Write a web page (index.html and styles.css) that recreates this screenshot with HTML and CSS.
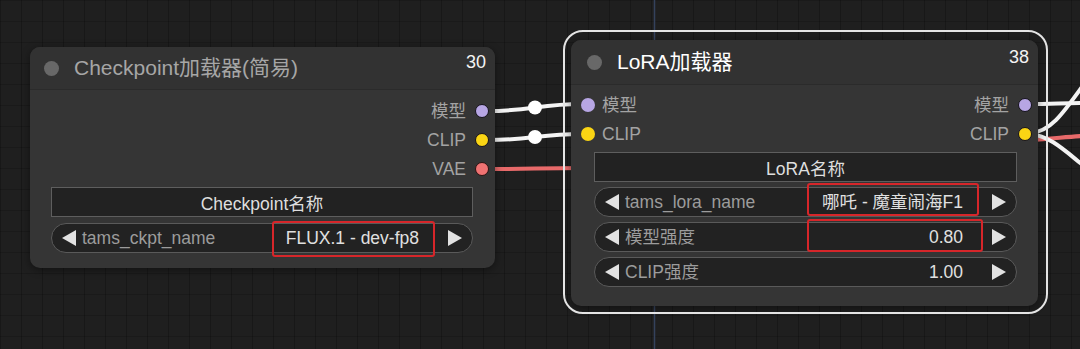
FILE: index.html
```html
<!DOCTYPE html>
<html>
<head>
<meta charset="utf-8">
<link rel="stylesheet" href="styles.css">
</head>
<body>
<div class="canvas">
  <svg class="wires" width="1080" height="349" viewBox="0 0 1080 349">
    <line class="guide" x1="654.5" y1="0" x2="654.5" y2="349"/>
    <path class="w red" d="M488 169 C 530 169, 540 168, 585 168"/>
    <path class="w red" d="M1030 140 C 1050 139, 1065 137, 1082 136"/>
    <path class="w white" d="M488 111 C 530 111, 540 104, 582 104"/>
    <path class="w white" d="M488 140 C 530 140, 540 134, 582 134"/>
    <circle class="mid" cx="535" cy="107.5" r="7"/>
    <circle class="mid" cx="535" cy="137" r="7"/>
    <path class="w white" d="M1030 104 C 1050 104, 1065 103, 1082 103"/>
    <path class="w white" d="M1030 133 C 1050 132, 1062 115, 1084 84"/>
    <path class="w white" d="M1030 134 C 1050 136, 1064 150, 1084 166"/>
  </svg>

  <div class="node ckpt">
    <div class="title">
      <span class="tdot"></span>
      <span class="tname">Checkpoint加载器(简易)</span>
      <span class="tid">30</span>
    </div>
    <div class="body">
      <div class="slots">
        <div class="row"><span class="out"><span class="lbl">模型</span><i class="dot model"></i></span></div>
        <div class="row"><span class="out"><span class="lbl">CLIP</span><i class="dot clip"></i></span></div>
        <div class="row"><span class="out"><span class="lbl">VAE</span><i class="dot vae"></i></span></div>
      </div>
      <div class="widgets">
        <div class="textw">Checkpoint名称</div>
        <div class="combo">
          <svg class="arr" width="14" height="16" viewBox="0 0 14 16"><path d="M14 0 L14 16 L0 8 Z"/></svg>
          <span class="clabel">tams_ckpt_name</span>
          <span class="cval">FLUX.1 - dev-fp8</span>
          <svg class="arr" width="14" height="16" viewBox="0 0 14 16"><path d="M0 0 L0 16 L14 8 Z"/></svg>
          <span class="mark mark-ckpt"></span>
        </div>
      </div>
    </div>
  </div>

  <div class="node lora selected">
    <div class="title">
      <span class="tdot"></span>
      <span class="tname">LoRA加载器</span>
      <span class="tid">38</span>
    </div>
    <div class="body">
      <div class="slots">
        <div class="row">
          <span class="in"><i class="dot model flat"></i><span class="lbl">模型</span></span>
          <span class="out"><span class="lbl">模型</span><i class="dot model"></i></span>
        </div>
        <div class="row">
          <span class="in"><i class="dot clip flat"></i><span class="lbl">CLIP</span></span>
          <span class="out"><span class="lbl">CLIP</span><i class="dot clip"></i></span>
        </div>
      </div>
      <div class="widgets">
        <div class="textw">LoRA名称</div>
        <div class="combo">
          <svg class="arr" width="14" height="16" viewBox="0 0 14 16"><path d="M14 0 L14 16 L0 8 Z"/></svg>
          <span class="clabel">tams_lora_name</span>
          <span class="cval">哪吒 - 魔童闹海F1</span>
          <svg class="arr" width="14" height="16" viewBox="0 0 14 16"><path d="M0 0 L0 16 L14 8 Z"/></svg>
          <span class="mark mark-lora1"></span>
        </div>
        <div class="combo">
          <svg class="arr" width="14" height="16" viewBox="0 0 14 16"><path d="M14 0 L14 16 L0 8 Z"/></svg>
          <span class="clabel">模型强度</span>
          <span class="cval">0.80</span>
          <svg class="arr" width="14" height="16" viewBox="0 0 14 16"><path d="M0 0 L0 16 L14 8 Z"/></svg>
          <span class="mark mark-lora2"></span>
        </div>
        <div class="combo">
          <svg class="arr" width="14" height="16" viewBox="0 0 14 16"><path d="M14 0 L14 16 L0 8 Z"/></svg>
          <span class="clabel">CLIP强度</span>
          <span class="cval">1.00</span>
          <svg class="arr" width="14" height="16" viewBox="0 0 14 16"><path d="M0 0 L0 16 L14 8 Z"/></svg>
        </div>
      </div>
    </div>
  </div>
</div>
</body>
</html>
```

FILE: styles.css
```css
* { box-sizing: border-box; }

html, body {
  margin: 0;
  padding: 0;
  background: #1e1e1e;
}

.canvas {
  position: relative;
  width: 1080px;
  height: 349px;
  overflow: hidden;
  background-color: #1f1f1f;
  background-image:
    linear-gradient(90deg, rgba(0, 0, 0, 0.22) 1px, transparent 1px),
    linear-gradient(rgba(0, 0, 0, 0.16) 1px, transparent 1px);
  background-size: 21px 21px;
  font-family: "Liberation Sans", "Noto Sans CJK SC", sans-serif;
}

.wires {
  position: absolute;
  left: 0;
  top: 0;
}

.guide {
  stroke: #34425c;
  stroke-width: 1.5;
}

.w {
  fill: none;
  stroke-width: 4;
  stroke-linecap: round;
}

.w.white { stroke: #f4f4f4; }
.w.red { stroke: #e86a6a; }

.mid { fill: #ffffff; }

/* nodes on the free canvas */
.node {
  position: absolute;
  display: flex;
  flex-direction: column;
  background: #353535;
  border-radius: 10px;
  box-shadow: 0 2px 8px rgba(0, 0, 0, 0.45);
}

.ckpt {
  left: 30px;
  top: 47px;
  width: 465px;
  height: 221px;
}

.lora {
  left: 571px;
  top: 40px;
  width: 467px;
  height: 266px;
}

.selected::before {
  content: "";
  position: absolute;
  left: -8px;
  top: -10px;
  right: -10px;
  bottom: -8px;
  border: 2px solid #e4e4e4;
  border-radius: 20px;
  pointer-events: none;
}

.title {
  display: flex;
  align-items: center;
  height: 43px;
  padding: 0 9px 0 14px;
  background: #323232;
  border-radius: 10px 10px 0 0;
  border-bottom: 1px solid #2b2b2b;
}

.lora .title {
  height: 45px;
  padding-left: 16px;
}

.tdot {
  width: 15px;
  height: 15px;
  border-radius: 50%;
  background: #686868;
  flex: none;
}

.tname {
  margin-left: 15px;
  font-size: 21px;
  line-height: 24px;
  color: #a6a6a6;
}

.lora .tname {
  color: #ffffff;
}

.tid {
  margin-left: auto;
  align-self: flex-start;
  margin-top: 5px;
  font-size: 18px;
  line-height: 20px;
  color: #f4f4f4;
}

.lora .tid {
  margin-top: 7px;
}

.body {
  display: flex;
  flex-direction: column;
  padding-top: 6px;
}

.lora .body {
  padding-top: 5px;
}

.slots {
  display: flex;
  flex-direction: column;
  padding: 0 6px 0 10px;
}

.row {
  display: flex;
  align-items: center;
  justify-content: flex-end;
  height: 29px;
}

.lora .row {
  justify-content: space-between;
}

.in, .out {
  display: flex;
  align-items: center;
}

.lbl {
  font-size: 17.5px;
  line-height: 20px;
  color: #a3a3a3;
}

.out .lbl { margin-right: 9px; }
.in .lbl { margin-left: 7px; }

.dot {
  display: block;
  width: 14px;
  height: 14px;
  border-radius: 50%;
  border: 1.5px solid #15121c;
}

.dot.flat { border-color: transparent; }

.dot.model { background: #b7a6e4; }
.dot.clip { background: #fad514; }
.dot.vae { background: #f07272; border-color: #2a1212; }

.widgets {
  display: flex;
  flex-direction: column;
  gap: 6px;
  margin: 4px 22px 0 21px;
}

.lora .widgets {
  margin: 4px 21px 0 23px;
  gap: 5px;
}

.textw {
  height: 30px;
  display: flex;
  align-items: center;
  justify-content: center;
  background: #222222;
  border: 1.5px solid #5e5e5e;
  font-size: 17.5px;
  color: #dedede;
}

.combo {
  position: relative;
  height: 30px;
  display: flex;
  align-items: center;
  padding: 0 10px;
  background: #222222;
  border: 1.5px solid #5a5a5a;
  border-radius: 15px;
}

.arr {
  flex: none;
  fill: #e2e2e2;
}

.clabel {
  margin-left: 6px;
  font-size: 17.5px;
  line-height: 20px;
  color: #9c9c9c;
}

.cval {
  margin-left: auto;
  margin-right: 29px;
  font-size: 17.5px;
  line-height: 20px;
  color: #e0e0e0;
}

/* red annotation boxes over the values */
.mark {
  position: absolute;
  border: 2.5px solid #d7262a;
  border-radius: 3px;
  pointer-events: none;
}

.mark-ckpt {
  left: 220px;
  top: -3px;
  width: 163px;
  height: 36px;
}

.mark-lora1 {
  left: 212px;
  top: -5px;
  width: 172px;
  height: 33px;
}

.mark-lora2 {
  left: 212px;
  top: -4px;
  width: 176px;
  height: 33px;
}
```
